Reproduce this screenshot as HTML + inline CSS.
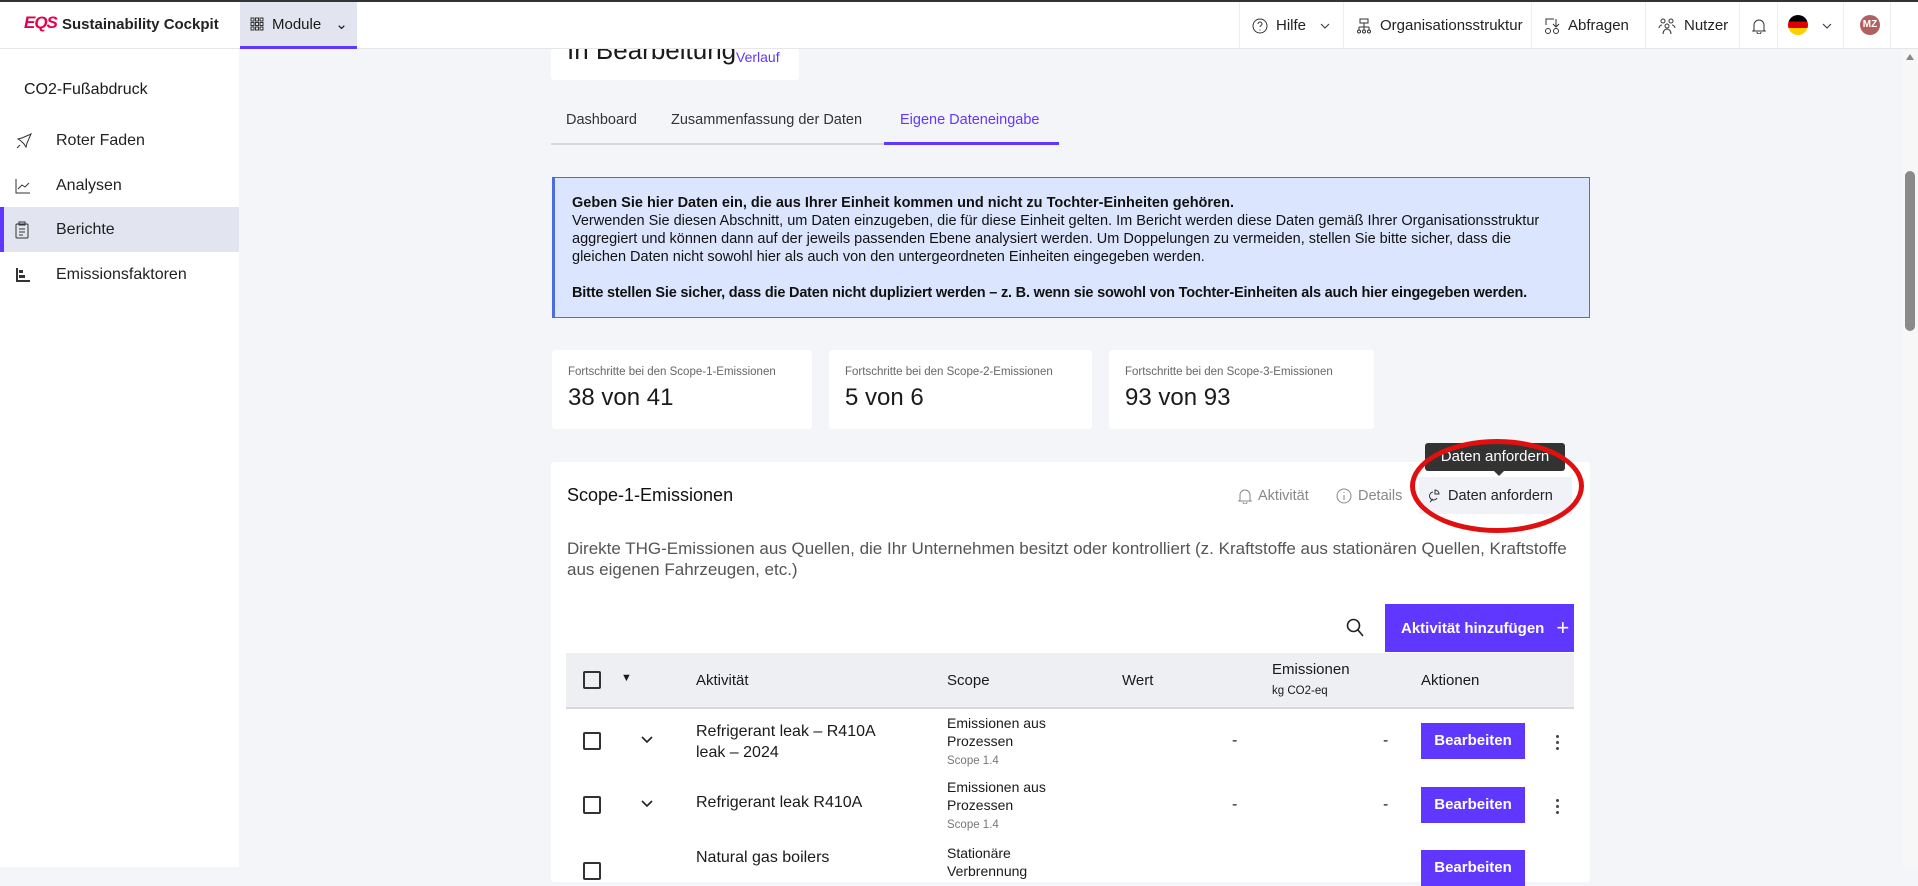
<!DOCTYPE html>
<html><head><meta charset="utf-8"><style>
*{box-sizing:border-box;margin:0;padding:0}
body{width:1918px;height:867px;overflow:hidden;background:#f4f5f9;font-family:"Liberation Sans",sans-serif;color:#1a1a1a;position:relative}
.abs{position:absolute}
.top{left:0;top:0;width:1918px;height:49px;background:#fff;border-top:2px solid #333;border-bottom:1px solid #e4e6ea}
.side{left:0;top:49px;width:239px;height:818px;background:#fff}
.nav{position:absolute;left:0;width:239px;height:45px;display:flex;align-items:center;font-size:16px;color:#222}
.nav svg{position:absolute;left:15px}
.nav span{position:absolute;left:56px}
.card{background:#fff;border-radius:3px}
.tbtn{display:flex;align-items:center;gap:8px;font-size:15px;color:#222;height:47px;top:0;position:absolute;border-left:1px solid #eee;padding:0 12px;white-space:nowrap}
.tbtn svg{flex-shrink:0}
.purple{background:#5f37ff;color:#fff}
.cb{position:absolute;width:18px;height:18px;border:2px solid #333;border-radius:2px}
.row{position:absolute;left:566px;width:1008px;font-size:16px}
.keb{position:absolute;left:990px;width:4px}
.keb i{display:block;width:3px;height:3px;background:#444;border-radius:50%;margin-bottom:3px}
</style></head><body>
<div class="abs top">
 <div class="abs" style="left:24px;top:11px;font-weight:bold;color:#e5004b;font-size:17px;font-style:italic;letter-spacing:-1px">EQS</div>
 <div class="abs" style="left:62px;top:14px;font-size:15px;font-weight:bold;color:#222">Sustainability Cockpit</div>
 <div class="abs" style="left:240px;top:0;width:117px;height:47px;background:#e2e4ef;border-bottom:3px solid #5f37ff;display:flex;align-items:center;padding-left:10px;gap:8px;font-size:15px">
  <svg width="14" height="14" viewBox="0 0 14 14" fill="none" stroke="#333" stroke-width="1"><rect x="1" y="1" width="3" height="3"/><rect x="5.5" y="1" width="3" height="3"/><rect x="10" y="1" width="3" height="3"/><rect x="1" y="5.5" width="3" height="3"/><rect x="5.5" y="5.5" width="3" height="3"/><rect x="10" y="5.5" width="3" height="3"/><rect x="1" y="10" width="3" height="3"/><rect x="5.5" y="10" width="3" height="3"/><rect x="10" y="10" width="3" height="3"/></svg>
  Module <span style="margin-left:6px">⌄</span></div>
 <div class="tbtn" style="left:1239px;width:97px"><svg width="16" height="16" viewBox="0 0 16 16" fill="none" stroke="#333"><circle cx="8" cy="8" r="7"/><path d="M6 6a2 2 0 114 0c0 1.5-2 1.5-2 3M8 11.5v1"/></svg>Hilfe <svg width="10" height="10" viewBox="0 0 10 10" fill="none" stroke="#333" style="margin-left:6px"><path d="M1 3l4 4 4-4"/></svg></div>
 <div class="tbtn" style="left:1343px;width:186px"><svg width="16" height="16" viewBox="0 0 16 16" fill="none" stroke="#333"><rect x="4" y="1" width="8" height="4"/><path d="M8 5v4M3 9h10M3 9v3M8 9v3M13 9v3"/><circle cx="3" cy="13.5" r="1.5"/><circle cx="8" cy="13.5" r="1.5"/><circle cx="13" cy="13.5" r="1.5"/></svg>Organisationsstruktur</div>
 <div class="tbtn" style="left:1531px;width:110px"><svg width="16" height="18" viewBox="0 0 16 18" fill="none" stroke="#333"><path d="M2 8V2h8M12 2v7M9 7l3 3 3-3"/><circle cx="4" cy="14" r="2.5"/><circle cx="12" cy="14" r="2.5"/></svg>Abfragen</div>
 <div class="tbtn" style="left:1645px;width:90px"><svg width="18" height="18" viewBox="0 0 18 18" fill="none" stroke="#333"><circle cx="5" cy="4" r="2"/><circle cx="13" cy="4" r="2"/><circle cx="9" cy="9" r="2"/><path d="M1 11c0-2 2-3 3-3M17 11c0-2-2-3-3-3M5 17c0-3 2-5 4-5s4 2 4 5"/></svg>Nutzer</div>
 <div class="tbtn" style="left:1739px;width:37px"><svg width="14" height="16" viewBox="0 0 14 16" fill="none" stroke="#333"><path d="M2 12V7a5 5 0 0110 0v5l1 1H1zM5 14a2 2 0 004 0"/></svg></div>
 <div class="tbtn" style="left:1777px;width:66px"></div>
 <div class="abs" style="left:1788px;top:13px;width:20px;height:20px;border-radius:50%;background:linear-gradient(#000 33%,#dd0000 33%,#dd0000 66%,#ffce00 66%)"></div>
 <svg class="abs" style="left:1822px;top:19px" width="10" height="10" viewBox="0 0 10 10" fill="none" stroke="#333"><path d="M1 3l4 4 4-4"/></svg>
 <div class="tbtn" style="left:1843px;width:48px;border-right:1px solid #eee"></div>
 <div class="abs" style="left:1860px;top:13px;width:20px;height:20px;border-radius:50%;background:#b06060;color:#fff;font-size:10px;font-weight:bold;text-align:center;line-height:20px">MZ</div>
</div>
<div class="abs side">
 <div class="abs" style="left:24px;top:32px;font-size:16px">CO2-Fußabdruck</div>
 <div class="nav" style="top:69px"><svg width="18" height="18" viewBox="0 0 18 18" fill="none" stroke="#333"><path d="M16 2L7 6l-4 1 3 2 3 3 2 3 1-4 4-9zM5 13l-3 3"/></svg><span>Roter Faden</span></div>
 <div class="nav" style="top:114px"><svg width="16" height="16" viewBox="0 0 16 16" fill="none" stroke="#333"><path d="M1 1v14h14M3 11l4-4 3 2 4-4"/></svg><span>Analysen</span></div>
 <div class="nav" style="top:158px;background:#e2e4ef;border-left:4px solid #5f37ff"><svg width="14" height="18" viewBox="0 0 14 18" fill="none" stroke="#333" style="left:11px"><rect x="1" y="3" width="12" height="14" rx="1"/><rect x="4" y="1" width="6" height="3"/><path d="M4 8h6M4 11h6M4 14h4"/></svg><span style="left:52px">Berichte</span></div>
 <div class="nav" style="top:203px"><svg width="16" height="16" viewBox="0 0 16 16" fill="#333"><rect x="1" y="1" width="2" height="14"/><rect x="1" y="13" width="14" height="2"/><rect x="4" y="3" width="4" height="3"/><rect x="4" y="8" width="6" height="3"/></svg><span>Emissionsfaktoren</span></div>
</div>
<div class="abs card" style="left:551px;top:49px;width:248px;height:31px;overflow:hidden">
 <div class="abs" style="left:16px;top:-14px;font-size:26px">In Bearbeitung</div>
 <div class="abs" style="left:185px;top:0;font-size:14px;color:#5f37ff">Verlauf</div>
</div>
<div class="abs" style="left:551px;top:143px;width:508px;height:2px;background:#d6d8de"></div>
<div class="abs" style="left:884px;top:142px;width:175px;height:3px;background:#5f37ff"></div>
<div class="abs" style="left:566px;top:112px;font-size:14.5px;color:#333">Dashboard</div>
<div class="abs" style="left:671px;top:112px;font-size:14.5px;color:#333">Zusammenfassung der Daten</div>
<div class="abs" style="left:900px;top:112px;font-size:14.5px;color:#5f37ff">Eigene Dateneingabe</div>
<div class="abs" style="left:552px;top:177px;width:1038px;height:141px;background:#dbe6fe;border:1px solid #4a6ee0;border-left:3px solid #4a6ee0;padding:16px 40px 0 17px;font-size:14.5px;line-height:18px;color:#111">
<b>Geben Sie hier Daten ein, die aus Ihrer Einheit kommen und nicht zu Tochter-Einheiten gehören.</b><br>Verwenden Sie diesen Abschnitt, um Daten einzugeben, die für diese Einheit gelten. Im Bericht werden diese Daten gemäß Ihrer Organisationsstruktur aggregiert und können dann auf der jeweils passenden Ebene analysiert werden. Um Doppelungen zu vermeiden, stellen Sie bitte sicher, dass die gleichen Daten nicht sowohl hier als auch von den untergeordneten Einheiten eingegeben werden.<div style="height:18px"></div><b style="white-space:nowrap;letter-spacing:-0.2px">Bitte stellen Sie sicher, dass die Daten nicht dupliziert werden – z. B. wenn sie sowohl von Tochter-Einheiten als auch hier eingegeben werden.</b></div>
<div class="abs card" style="left:552px;top:350px;width:260px;height:79px;padding:16px"><div style="font-size:11.5px;color:#666">Fortschritte bei den Scope-1-Emissionen</div><div style="font-size:24px;margin-top:6px">38 von 41</div></div>
<div class="abs card" style="left:829px;top:350px;width:263px;height:79px;padding:16px"><div style="font-size:11.5px;color:#666">Fortschritte bei den Scope-2-Emissionen</div><div style="font-size:24px;margin-top:6px">5 von 6</div></div>
<div class="abs card" style="left:1109px;top:350px;width:265px;height:79px;padding:16px"><div style="font-size:11.5px;color:#666">Fortschritte bei den Scope-3-Emissionen</div><div style="font-size:24px;margin-top:6px">93 von 93</div></div>
<div class="abs card" style="left:551px;top:462px;width:1039px;height:420px"></div>
<div class="abs" style="left:567px;top:485px;font-size:18px;color:#111">Scope-1-Emissionen</div>
<div class="abs" style="left:1238px;top:488px;font-size:14.5px;color:#888;display:flex;gap:6px;align-items:center"><svg width="14" height="16" viewBox="0 0 14 16" fill="none" stroke="#888"><path d="M2 12V7a5 5 0 0110 0v5l1 1H1zM5 14a2 2 0 004 0"/></svg>Aktivität</div>
<div class="abs" style="left:1336px;top:488px;font-size:14.5px;color:#888;display:flex;gap:6px;align-items:center"><svg width="16" height="16" viewBox="0 0 16 16" fill="none" stroke="#888"><circle cx="8" cy="8" r="7"/><path d="M8 7v5M8 4v1"/></svg>Details</div>
<div class="abs" style="left:1419px;top:477px;width:153px;height:37px;background:#f1f2f8;display:flex;align-items:center;gap:6px;padding-left:9px;font-size:14.5px;color:#222"><svg width="14" height="16" viewBox="0 0 14 16" fill="none" stroke="#333"><path d="M7 2a4 4 0 014 4H7zM5 4a4 4 0 104 6M2 14l3-3"/></svg>Daten anfordern</div>
<div class="abs" style="left:1425px;top:443px;width:140px;height:28px;background:#333;color:#fff;border-radius:3px;font-size:15px;text-align:center;line-height:28px">Daten anfordern</div>
<div class="abs" style="left:1493px;top:470px;width:0;height:0;border-left:6px solid transparent;border-right:6px solid transparent;border-top:6px solid #333"></div>
<div class="abs" style="left:1410px;top:439px;width:174px;height:94px;border:5px solid #e01010;border-radius:50%"></div>
<div class="abs" style="left:567px;top:538px;width:1010px;font-size:17px;line-height:21px;color:#555">Direkte THG-Emissionen aus Quellen, die Ihr Unternehmen besitzt oder kontrolliert (z. Kraftstoffe aus stationären Quellen, Kraftstoffe aus eigenen Fahrzeugen, etc.)</div>
<svg class="abs" style="left:1346px;top:618px" width="18" height="20" viewBox="0 0 18 20" fill="none" stroke="#222" stroke-width="1.6"><circle cx="7.5" cy="7.5" r="6"/><path d="M12 12l5 6"/></svg>
<div class="abs purple" style="left:1385px;top:604px;width:189px;height:48px;font-size:15px;font-weight:bold;display:flex;align-items:center;padding-left:16px">Aktivität hinzufügen<span style="margin-left:12px;font-size:22px;font-weight:normal">+</span></div>
<div class="row" style="top:653px;height:56px;background:#eeeff2;border-bottom:2px solid #d8d9de;font-size:15px">
 <div class="cb" style="left:17px;top:18px"></div>
 <div class="abs" style="left:55px;top:19px;font-size:11px">▼</div>
 <div class="abs" style="left:130px;top:19px">Aktivität</div>
 <div class="abs" style="left:381px;top:19px">Scope</div>
 <div class="abs" style="left:556px;top:19px">Wert</div>
 <div class="abs" style="left:706px;top:8px">Emissionen</div>
 <div class="abs" style="left:706px;top:32px;font-size:11.5px">kg CO2-eq</div>
 <div class="abs" style="left:855px;top:19px">Aktionen</div>
</div>
<div class="row" style="top:712px;height:64px">
 <div class="cb" style="left:17px;top:20px"></div>
 <svg class="abs" style="left:75px;top:24px" width="12" height="8" viewBox="0 0 12 8" fill="none" stroke="#222" stroke-width="1.6"><path d="M1 1l5 5 5-5"/></svg>
 <div class="abs" style="left:130px;top:9px;line-height:21px">Refrigerant leak – R410A<br>leak – 2024</div>
 <div class="abs" style="left:381px;top:2px;font-size:14px;line-height:18px">Emissionen aus<br>Prozessen<br><span style="font-size:11.5px;color:#777">Scope 1.4</span></div>
 <div class="abs" style="left:666px;top:20px">-</div><div class="abs" style="left:817px;top:20px">-</div>
 <div class="abs purple" style="left:855px;top:11px;width:104px;height:36px;font-size:15px;font-weight:bold;text-align:center;line-height:36px">Bearbeiten</div>
 <div class="keb" style="top:23px"><i></i><i></i><i></i></div>
</div>
<div class="row" style="top:776px;height:64px">
 <div class="cb" style="left:17px;top:20px"></div>
 <svg class="abs" style="left:75px;top:24px" width="12" height="8" viewBox="0 0 12 8" fill="none" stroke="#222" stroke-width="1.6"><path d="M1 1l5 5 5-5"/></svg>
 <div class="abs" style="left:130px;top:18px">Refrigerant leak R410A</div>
 <div class="abs" style="left:381px;top:2px;font-size:14px;line-height:18px">Emissionen aus<br>Prozessen<br><span style="font-size:11.5px;color:#777">Scope 1.4</span></div>
 <div class="abs" style="left:666px;top:20px">-</div><div class="abs" style="left:817px;top:20px">-</div>
 <div class="abs purple" style="left:855px;top:11px;width:104px;height:36px;font-size:15px;font-weight:bold;text-align:center;line-height:36px">Bearbeiten</div>
 <div class="keb" style="top:23px"><i></i><i></i><i></i></div>
</div>
<div class="row" style="top:840px;height:40px">
 <div class="cb" style="left:17px;top:22px"></div>
 <div class="abs" style="left:130px;top:9px">Natural gas boilers</div>
 <div class="abs" style="left:381px;top:4px;font-size:14px;line-height:18px">Stationäre<br>Verbrennung</div>
 <div class="abs purple" style="left:855px;top:10px;width:104px;height:36px;font-size:15px;font-weight:bold;text-align:center;line-height:36px">Bearbeiten</div>
</div>
<div class="abs" style="left:1902px;top:49px;width:16px;height:818px;background:#f7f7f7"></div>
<div class="abs" style="left:1906px;top:54px;width:0;height:0;border-left:4px solid transparent;border-right:4px solid transparent;border-bottom:6px solid #888"></div>
<div class="abs" style="left:1905px;top:171px;width:10px;height:160px;background:#8a8a8a;border-radius:5px"></div>
</body></html>
